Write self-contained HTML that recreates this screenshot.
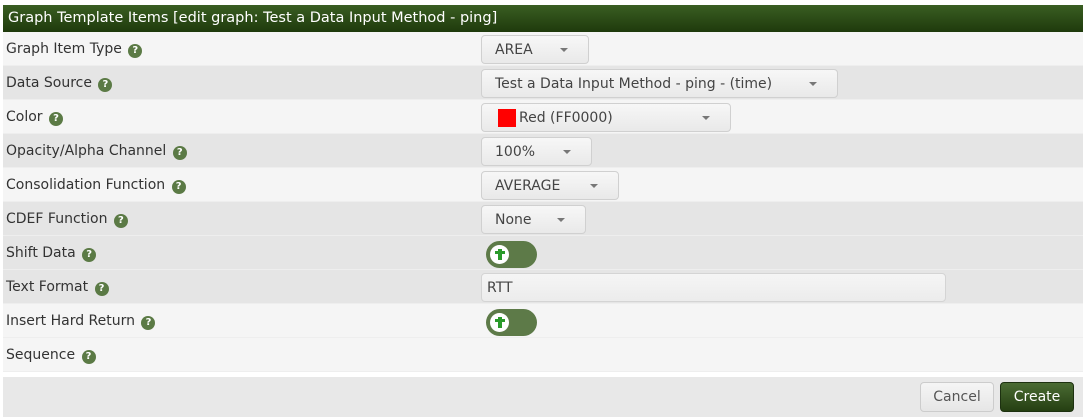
<!DOCTYPE html>
<html><head><style>
body{margin:0;background:#fff;width:1086px;height:417px;overflow:hidden;font-family:"DejaVu Sans",Verdana,sans-serif;font-size:14px;color:#333}
.wrap{position:absolute;left:3px;top:5px;width:1080px}
.hdr{height:27px;background:linear-gradient(#3a5e22,#1f3a0c);color:#fff;font-size:14.5px;line-height:27px;padding-left:5px}
.row{position:relative;height:34px;border-bottom:1px solid #eee;box-sizing:border-box}
.l{background:#f5f5f5}.d{background:#e5e5e5}
.lab{position:absolute;left:3px;top:9px}
.q{display:inline-block;width:14px;height:14px;border-radius:50%;background:#5b7a45;color:#fff;font-size:10px;font-weight:bold;text-align:center;line-height:14px;vertical-align:0px;margin-left:2px}
.sel{position:absolute;left:478px;top:3px;height:29px;box-sizing:border-box;border:1px solid #d0d0d0;border-radius:4px;background:linear-gradient(#f7f7f7,#e9e9e9);line-height:29px;padding-left:13px;color:#444}
.sel:after{content:"";position:absolute;right:20px;top:12px;border:4px solid transparent;border-top:4px solid #777}
.tog{position:absolute;left:483px;top:5px;width:51px;height:27px;border-radius:14px;background:#5d7a48}
.tog i{position:absolute;left:4px;top:4px;width:19px;height:19px;border-radius:50%;background:#fff}
.tog i:after{content:"";position:absolute;left:8px;top:4px;width:4px;height:11px;background:#2a9a2a}
.tog i:before{content:"";position:absolute;left:5px;top:6px;width:10px;height:3px;background:#2a9a2a}
.inp{position:absolute;left:478px;top:3px;width:465px;height:29px;box-sizing:border-box;border:1px solid #d4d4d4;border-radius:4px;background:linear-gradient(#f5f5f5,#ececec);line-height:29px;padding-left:5px;color:#444}
.foot{position:absolute;left:3px;top:377px;width:1080px;height:40px;background:#e8e8e8}
.btn{position:absolute;top:5px;height:30px;box-sizing:border-box;border-radius:4px;line-height:29px;text-align:center;font-size:14px}
</style></head><body>
<div class="wrap">
<div class="hdr">Graph Template Items [edit graph: Test a Data Input Method - ping]</div>
<div class="row l"><span class="lab">Graph Item Type <span class="q">?</span></span><div class="sel" style="width:108px">AREA</div></div>
<div class="row d"><span class="lab">Data Source <span class="q">?</span></span><div class="sel" style="width:357px">Test a Data Input Method - ping - (time)</div></div>
<div class="row l"><span class="lab">Color <span class="q">?</span></span><div class="sel" style="width:250px;padding-left:37px"><span style="position:absolute;left:16px;top:5px;width:18px;height:18px;background:#f00"></span>Red (FF0000)</div></div>
<div class="row d"><span class="lab">Opacity/Alpha Channel <span class="q">?</span></span><div class="sel" style="width:111px">100%</div></div>
<div class="row l"><span class="lab">Consolidation Function <span class="q">?</span></span><div class="sel" style="width:138px">AVERAGE</div></div>
<div class="row d"><span class="lab">CDEF Function <span class="q">?</span></span><div class="sel" style="width:105px">None</div></div>
<div class="row d"><span class="lab">Shift Data <span class="q">?</span></span><div class="tog"><i></i></div></div>
<div class="row d"><span class="lab">Text Format <span class="q">?</span></span><div class="inp">RTT</div></div>
<div class="row l"><span class="lab">Insert Hard Return <span class="q">?</span></span><div class="tog"><i></i></div></div>
<div class="row l"><span class="lab">Sequence <span class="q">?</span></span></div>
</div>
<div class="foot">
<div class="btn" style="left:917px;width:74px;border:1px solid #ccc;background:linear-gradient(#f5f5f5,#e6e6e6);color:#555">Cancel</div>
<div class="btn" style="left:997px;width:74px;border:1px solid #1d3110;background:linear-gradient(#4a6b33,#253f12);color:#fff">Create</div>
</div>
</body></html>
